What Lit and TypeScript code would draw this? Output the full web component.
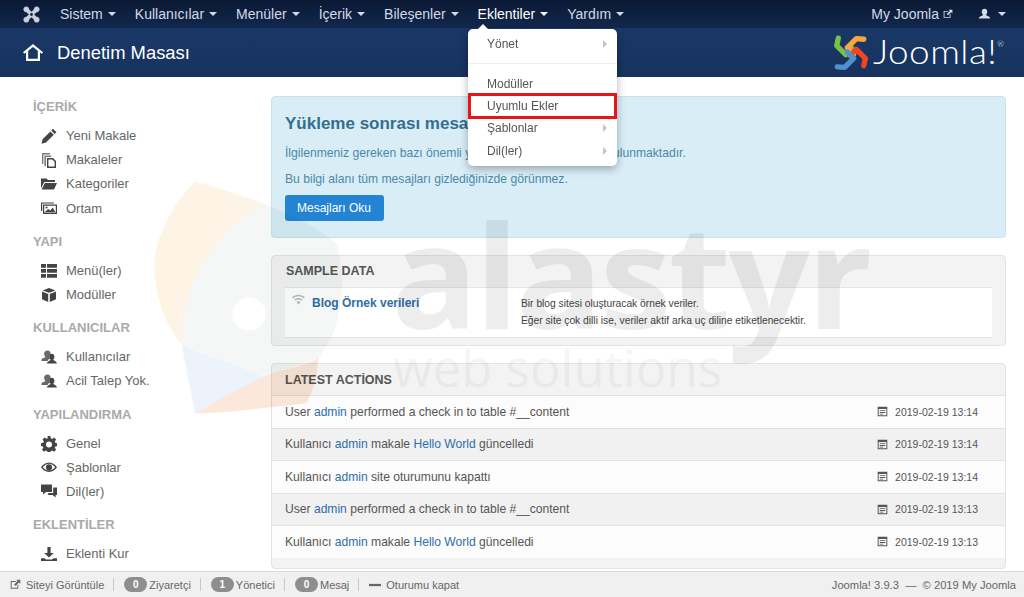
import { LitElement, html, css, svg } from 'lit';
import { customElement } from 'lit/decorators.js';

const icons: Record<string, any> = {
  pencil: svg`<path d="M12 .8l3.400 3.400-1.700 1.700-3.400-3.400zM9.400 3.400l3.400 3.400-7.800 7.800-4.500 1.100 1.100-4.500z"/>`,
  copy: svg`<path d="M1 1h8v1.400H2.400V12H1z" opacity=".7"/><path d="M3.400 3.400h7V5H5v9.200H3.400z" opacity=".7"/><path fill-rule="evenodd" d="M6 6h6l3 3v7H6zm1.400 1.400v7.200h6.200V9.800l-2.400-2.400z"/>`,
  folder: svg`<path d="M0 2.500h5.500l1.400 1.600H14v2H3.200L0 12.500zM3.800 7.100H16l-3 6.400H.6z"/>`,
  image: svg`<path d="M0 1.500h13v1H1.200V10H0z"/><path fill-rule="evenodd" d="M2 3.600h14V13H2zm1.200 1.200v6.800h11.600V4.800z"/><path d="M3.800 11l3.400-3 2 1.600 2.600-3 2.400 4.400zM5.600 5.600a1 1 0 110 2 1 1 0 010-2z"/>`,
  list: svg`<path d="M0 1h5v3.800H0zM6 1h10v3.800H6zM0 6h5v3.800H0zM6 6h10v3.800H6zM0 11h5v3.800H0zM6 11h10v3.800H6z"/>`,
  cube: svg`<path d="M8 1l6.400 2.400L8 5.800 1.600 3.400zM1 4.600l6.200 2.300V15L1 12.300zM15 4.600L8.800 6.900V15l6.200-2.700z"/>`,
  users: svg`<path d="M6.600 1.600c2 0 3 1.400 3 3.200 0 1.200-.5 2.400-1.200 3 0 1 .4 1.200 1.600 1.600l-2 .8c-.9.4-1.200 1-1.200 1.800H.4c0-1.800.4-2.400 2-3 1.400-.5 2-.7 2-1.300-.8-.6-1.200-1.800-1.200-3 0-1.800 1-3.100 3.400-3.100z" opacity=".8"/><path d="M10.600 4.800c1.800 0 2.800 1.300 2.800 2.900 0 1.100-.5 2.200-1.100 2.800 0 .8.5 1 1.500 1.400 1.400.5 2 1 2 2.700H6c0-1.700.6-2.200 2-2.700 1-.4 1.500-.6 1.500-1.400-.7-.6-1.100-1.700-1.100-2.800 0-1.600 1-2.900 2.200-2.900z"/>`,
  gear: svg`<path fill-rule="evenodd" d="M6.600 0h2.800l.4 2.300 1.300.6 2-1.300 2 2-1.300 1.900.5 1.300 2.300.5v2.800l-2.300.4-.5 1.300 1.300 2-2 2-1.900-1.300-1.400.5-.4 2.400H6.600l-.4-2.400-1.300-.5L3 15.800l-2-2 1.300-2-.5-1.300L0 10V7.200l2.300-.5.5-1.300L1.500 3.500l2-2 2 1.300 1.200-.6zM8 5.600a3 3 0 100 6 3 3 0 000-6z"/>`,
  eye: svg`<path fill-rule="evenodd" d="M8 2.500c3.600 0 6.400 2.200 8 4.800-1.600 2.600-4.400 4.700-8 4.700s-6.400-2.100-8-4.700c1.600-2.600 4.400-4.800 8-4.800zM1.800 7.300c1.400 1.700 3.600 3.400 6.200 3.400s4.800-1.700 6.200-3.400C12.800 5.500 10.600 3.800 8 3.800S3.200 5.500 1.800 7.300zM8 4.200a3.100 3.100 0 110 6.200 3.100 3.100 0 010-6.200z"/>`,
  comments: svg`<path d="M0 .5h11v7.400H5L2 10.500V7.900H0z"/><path d="M12.200 3.500H16v7.400h-1.400v2.600l-3-2.600H6.600l1-1.800h4.600z"/>`,
  download: svg`<path d="M6.400 1h3.200v6h3.200L8 11.400 3.200 7h3.200zM0 12.200h3.600L5 13.600h6l1.400-1.400H16V15H0z"/>`,
  calendar: svg`<path fill-rule="evenodd" d="M1 1h14v14H1zm1.400 3.200v9.400h11.200V4.200zM4 6h8v1.400H4zm0 2.800h8v1.400H4zm0 2.400h5v1.200H4z"/>`,
  external: svg`<path d="M1 3h8L7.600 4.400H2.400v8.200h8.200V9L12 7.600V14H1z"/><path d="M9 1h6v6l-2-2-5 5-2-2 5-5z"/>`,
  user: svg`<path d="M8 1c2.200 0 3.400 1.600 3.400 3.600 0 1.400-.5 2.700-1.400 3.400 0 1 .6 1.300 2 1.800 2 .7 2.800 1.300 2.800 3.200H1.200c0-1.900.8-2.500 2.800-3.200 1.400-.5 2-.8 2-1.800-.9-.7-1.400-2-1.400-3.400C4.600 2.600 5.800 1 8 1z"/>`,
  home: svg`<path fill-rule="evenodd" d="M10 1l10 8.200-1.300 1.600L17 9.400V18H3V9.400l-1.700 1.400L0 9.200zM5.200 7.800V15.800h9.600V7.800L10 3.900z"/>`,
  wifi: svg`<path d="M8 2c3 0 5.800 1.200 8 3.200l-1.500 1.500C12.800 5.100 10.500 4.100 8 4.100S3.200 5.100 1.500 6.700L0 5.200C2.200 3.200 5 2 8 2zM8 6c2 0 3.800.8 5.200 2l-1.500 1.500C10.700 8.600 9.400 8.100 8 8.100s-2.700.5-3.700 1.400L2.800 8C4.200 6.800 6 6 8 6zM8 10c1 0 2 .4 2.600 1L8 14l-2.600-3c.6-.6 1.600-1 2.600-1z"/>`,
  minus: svg`<path d="M0 6.500h16v3H0z"/>`,
};

const icon = (name: string, size = 16, box = 16) =>
  html`<svg class="ico" width=${size} height=${size} viewBox="0 0 ${box} ${box}" fill="currentColor">${icons[name]}</svg>`;

const arms = [
  ['M7 5L5.500 12L14 20.500L20 14.500', '#7ac143'],
  ['M31 6L24 5.500L15.500 14L21.500 20', '#f9a541'],
  ['M31 31L32.500 24L24 15.500L18 21.500', '#f44321'],
  ['M6 32L13 32.500L21.500 24L15.500 18', '#5091cd'],
];

const sidebar = [
  { title: 'İÇERİK', items: [['pencil', 'Yeni Makale'], ['copy', 'Makaleler'], ['folder', 'Kategoriler'], ['image', 'Ortam']] },
  { title: 'YAPI', items: [['list', 'Menü(ler)'], ['cube', 'Modüller']] },
  { title: 'KULLANICILAR', items: [['users', 'Kullanıcılar'], ['users', 'Acil Talep Yok.']] },
  { title: 'YAPILANDIRMA', items: [['gear', 'Genel'], ['eye', 'Şablonlar'], ['comments', 'Dil(ler)']] },
  { title: 'EKLENTİLER', items: [['download', 'Eklenti Kur']] },
];

const nav = ['Sistem', 'Kullanıcılar', 'Menüler', 'İçerik', 'Bileşenler', 'Eklentiler', 'Yardım'];

const actions = [
  [html`User <a>admin</a> performed a check in to table #__content`, '2019-02-19 13:14'],
  [html`Kullanıcı <a>admin</a> makale <a>Hello World</a> güncelledi`, '2019-02-19 13:14'],
  [html`Kullanıcı <a>admin</a> site oturumunu kapattı`, '2019-02-19 13:14'],
  [html`User <a>admin</a> performed a check in to table #__content`, '2019-02-19 13:13'],
  [html`Kullanıcı <a>admin</a> makale <a>Hello World</a> güncelledi`, '2019-02-19 13:13'],
];

@customElement('app-root')
export class AppRoot extends LitElement {
  static styles = css`
    :host {
      display: flex;
      flex-direction: column;
      position: relative;
      height: 597px;
      overflow: hidden;
      background: #fff;
      color: #555;
      font: 13px/18px 'Liberation Sans', Arial, sans-serif;
    }
    a { color: #2f6ea8; }
    .ico { display: block; flex: none; }

    .navbar {
      display: flex;
      align-items: center;
      flex: none;
      height: 28px;
      padding: 0 18px 0 23px;
      background: linear-gradient(#0a1833, #12284d);
      color: #d3dae6;
      font-size: 14px;
    }
    .brand { color: #c9d0dc; margin-right: 20px; }
    .nav-item { display: flex; align-items: center; gap: 5px; margin-right: 19px; }
    .nav-item.open { color: #fff; }
    .caret { width: 0; height: 0; border: 4px solid transparent; border-top-color: currentColor; border-bottom: 0; }
    .nav-right { display: flex; align-items: center; margin-left: auto; gap: 7px; }
    .site { display: flex; align-items: center; gap: 4px; margin-right: 18px; }

    .header {
      display: flex;
      align-items: center;
      justify-content: space-between;
      flex: none;
      height: 49px;
      padding: 0 24px 0 23px;
      background: linear-gradient(#1a3867, #17325d);
      color: #fff;
    }
    .title { display: flex; align-items: center; gap: 14px; font-size: 18.4px; }
    .logo { display: flex; align-items: center; gap: 5px; width: 167px; }
    .logo-text {
      display: inline-block;
      font: 300 33px/40px Lato, sans-serif;
      letter-spacing: 0.4px;
      margin-top: -3px;
      transform: scaleX(1.12);
      transform-origin: left center;
      white-space: nowrap;
    }
    .logo-text sup { font-size: 7px; line-height: 0; vertical-align: 17px; }

    .body { display: flex; flex: 1; min-height: 0; overflow: hidden; }
    .side { flex: none; width: 239px; padding: 21px 0 0 33px; box-sizing: border-box; }
    .side h4 { margin: 0 0 8px; height: 18px; font-size: 13px; font-weight: bold; color: #aaa; }
    .side ul { list-style: none; margin: 0 0 12px; padding: 0 0 0 8px; }
    .side li { display: flex; align-items: center; gap: 9px; height: 24.2px; color: #666; }
    .side li .ico { color: #444; }

    .main { flex: 1; padding: 19px 18px 0 32px; min-width: 0; }
    .alert {
      box-sizing: border-box;
      height: 142px;
      padding: 17px 13px 0;
      margin-bottom: 17px;
      background: #d9edf7;
      border: 1px solid #c6e3ee;
      border-radius: 4px;
      color: #4a8aa8;
    }
    .alert h2 { margin: 0 0 10px; font-size: 17px; line-height: 20px; color: #336f8e; }
    .alert p { margin: 0 0 8px; line-height: 18px; font-size: 12.15px; }
    .btn {
      display: inline-block;
      margin-top: -1px;
      padding: 4px 12px;
      width: 75px;
      background: #2384d3;
      border-radius: 3px;
      color: #fff;
      font-size: 12px;
      white-space: nowrap;
    }

    .well {
      border: 1px solid #e3e3e3;
      border-radius: 4px;
      background: #f3f3f3;
      margin-bottom: 17px;
    }
    .well h3 { margin: 0; padding: 6px 14px 7px; font-size: 12.5px; line-height: 18px; color: #555; }
    .sample { padding-bottom: 7px; }
    .sample-row {
      display: flex;
      height: 51px;
      margin: 0 13px;
      padding-left: 7px;
      background: #fff;
      border-top: 1px solid #e6e6e6;
      border-bottom: 1px solid #e6e6e6;
      box-sizing: border-box;
    }
    .sample-name { display: flex; gap: 7px; width: 229px; padding-top: 6px; font-weight: bold; font-size: 12px; color: #2f6ea8; }
    .sample-name .ico { color: #bbb; margin-top: -1px; }
    .sample-desc { font-size: 10.25px; line-height: 17px; padding-top: 7px; color: #444; }
    .actions { margin-bottom: 0; height: 204px; overflow: hidden; }
    .actions h3 { padding: 7px 13px 6px; font-size: 12.5px; }
    .row {
      display: flex;
      align-items: center;
      justify-content: space-between;
      box-sizing: border-box;
      height: 32.5px;
      padding: 0 27px 0 13px;
      background: #fcfcfc;
      border-top: 1px solid #e2e2e2;
      font-size: 12.1px;
    }
    .row:nth-child(even) { background: #f1f1f1; }
    .row time { display: flex; align-items: center; gap: 7px; font-size: 10.5px; color: #555; }
    .row time .ico { color: #555; }

    .status {
      display: flex;
      align-items: center;
      flex: none;
      height: 26px;
      padding: 0 8px 0 10px;
      background: #f0f0f0;
      border-top: 1px solid #dcdcdc;
      box-sizing: border-box;
      font-size: 11px;
      color: #666;
    }
    .status .cell { display: flex; align-items: center; gap: 2px; }
    .status .cell.with-ico { gap: 5px; }
    .status .sep { width: 1px; height: 13px; margin: 0 10px 0 9px; background: #c8c8c8; }
    .badge {
      display: flex;
      align-items: center;
      justify-content: center;
      width: 23px;
      height: 15px;
      border-radius: 8px;
      background: #8e8e8e;
      color: #fff;
      font-size: 10px;
      font-weight: bold;
    }
    .version { margin-left: auto; font-size: 11.2px; }

    /* watermark baked into the picture, sits over the content */
    .mark { position: absolute; inset: 77px 0 26px 0; pointer-events: none; overflow: hidden; mix-blend-mode: multiply; }
    .mark svg { position: absolute; left: 130px; top: 93px; }
    .mark .big {
      position: absolute;
      left: 391px;
      top: 121px;
      font: bold 144px/150px 'Open Sans', sans-serif;
      letter-spacing: -3px;
      color: #555;
      opacity: 0.1;
    }
    .mark .small {
      position: absolute;
      left: 393px;
      top: 262px;
      font: 51px/56px 'Open Sans', sans-serif;
      color: #555;
      opacity: 0.06;
    }

    .menu {
      position: absolute;
      left: 468px;
      top: 29px;
      width: 149px;
      box-sizing: border-box;
      padding: 4px 0;
      height: 137px;
      background: #fff;
      border-radius: 5px;
      box-shadow: 0 3px 8px rgba(0, 0, 0, 0.3);
      color: #555;
      font-size: 12px;
    }
    .menu::before {
      content: '';
      position: absolute;
      left: 10px;
      top: -5px;
      border: 5px solid transparent;
      border-top: 0;
      border-bottom-color: #fff;
    }
    .menu .mi { display: flex; align-items: center; justify-content: space-between; height: 22.4px; padding: 0 10px 0 19px; }
    .menu .arrow { border: 4px solid transparent; border-left-color: #c4c4c4; border-right: 0; }
    .menu .divider { height: 1px; background: #eee; margin: 8px 0 8px; }
    .menu .hit { margin: 0 2px; padding-left: 17px; outline: 3px solid #e8141c; outline-offset: -1px; }
  `;

  render() {
    return html`
      <div class="navbar">
        <span class="brand">
          <svg class="ico" width="17" height="17" viewBox="0 0 36 36" fill="currentColor" stroke="currentColor">
            <circle cx="7" cy="7" r="5.500"/><circle cx="29" cy="7" r="5.500"/><circle cx="7" cy="29" r="5.500"/><circle cx="29" cy="29" r="5.500"/>
            <path d="M7 7L29 29M29 7L7 29" fill="none" stroke-width="8"/>
            <circle cx="18" cy="18" r="3" fill="#0f2446" stroke="none"/>
          </svg>
        </span>
        ${nav.map(n => html`<div class="nav-item ${n === 'Eklentiler' ? 'open' : ''}">${n}<span class="caret"></span></div>`)}
        <div class="nav-right">
          <span class="site">My Joomla ${icon('external', 10)}</span>
          ${icon('user', 13)}<span class="caret"></span>
        </div>
      </div>
      <div class="header">
        <div class="title">${icon('home', 20, 20)}Denetim Masası</div>
        <div class="logo">
          <svg class="ico" width="35" height="35" viewBox="2 2 33 33" fill="none" stroke-width="5" stroke-linecap="round" stroke-linejoin="round">
            ${arms.map(([d, c]) => svg`<path d=${d} stroke=${c}/>`)}
          </svg>
          <span class="logo-text">Joomla!<sup>®</sup></span>
        </div>
      </div>
      <div class="body">
        <div class="side">
          ${sidebar.map(s => html`
            <h4>${s.title}</h4>
            <ul>${s.items.map(([ic, label]) => html`<li>${icon(ic)}<span>${label}</span></li>`)}</ul>
          `)}
        </div>
        <div class="main">
          <div class="alert">
            <h2>Yükleme sonrası mesajlar</h2>
            <p>İlgilenmeniz gereken bazı önemli yükleme sonrası mesajlar bulunmaktadır.</p>
            <p>Bu bilgi alanı tüm mesajları gizlediğinizde görünmez.</p>
            <span class="btn">Mesajları Oku</span>
          </div>
          <div class="well sample">
            <h3>SAMPLE DATA</h3>
            <div class="sample-row">
              <div class="sample-name">${icon('wifi', 13)}Blog Örnek verileri</div>
              <div class="sample-desc">Bir blog sitesi oluşturacak örnek veriler.<br />Eğer site çok dilli ise, veriler aktif arka uç diline etiketlenecektir.</div>
            </div>
          </div>
          <div class="well actions">
            <h3>LATEST ACTİONS</h3>
            <div>
              ${actions.map(([text, date]) => html`
                <div class="row"><span>${text}</span><time>${icon('calendar', 11)}${date}</time></div>
              `)}
            </div>
          </div>
        </div>
      </div>
      <div class="status">
        <span class="cell with-ico">${icon('external', 11)}Siteyi Görüntüle</span><span class="sep"></span>
        <span class="cell"><span class="badge">0</span>Ziyaretçi</span><span class="sep"></span>
        <span class="cell"><span class="badge">1</span>Yönetici</span><span class="sep"></span>
        <span class="cell"><span class="badge">0</span>Mesaj</span><span class="sep"></span>
        <span class="cell with-ico">${icon('minus', 12)}Oturumu kapat</span>
        <span class="version">Joomla! 3.9.3 &nbsp;—&nbsp; © 2019 My Joomla</span>
      </div>
      <div class="mark">
        <svg width="300" height="300" viewBox="0 0 900 900">
          <mask id="hole">
            <rect width="900" height="900" fill="#fff"/>
            <circle cx="357" cy="432" r="50" fill="#000"/>
          </mask>
          <g mask="url(#hole)">
            <path d="M195 35C260 50 340 80 400 100C280 170 180 300 160 450L155 525C120 480 85 420 75 320C60 240 110 120 195 35z" fill="#f9d9a8" opacity=".3"/>
            <path d="M400 100C280 170 180 300 160 450L155 525L400 620L565 565C600 520 620 470 625 430C640 370 640 300 620 220C560 170 480 130 400 100z" fill="#dfe8e6" opacity=".35"/>
            <path d="M155 525L195 730C260 690 340 650 400 620C330 590 240 560 155 525z" fill="#cfe0f3" opacity=".4"/>
            <path d="M400 620C450 600 520 590 565 565C560 620 550 660 530 700C420 710 300 730 195 730C260 690 340 650 400 620z" fill="#f6c5a5" opacity=".4"/>
          </g>
        </svg>
        <div class="big">alastyr</div>
        <div class="small">web solutions</div>
      </div>
      <div class="menu">
        <div class="mi">Yönet<span class="arrow"></span></div>
        <div class="divider"></div>
        <div class="mi">Modüller</div>
        <div class="mi hit">Uyumlu Ekler</div>
        <div class="mi">Şablonlar<span class="arrow"></span></div>
        <div class="mi">Dil(ler)<span class="arrow"></span></div>
      </div>
    `;
  }
}
